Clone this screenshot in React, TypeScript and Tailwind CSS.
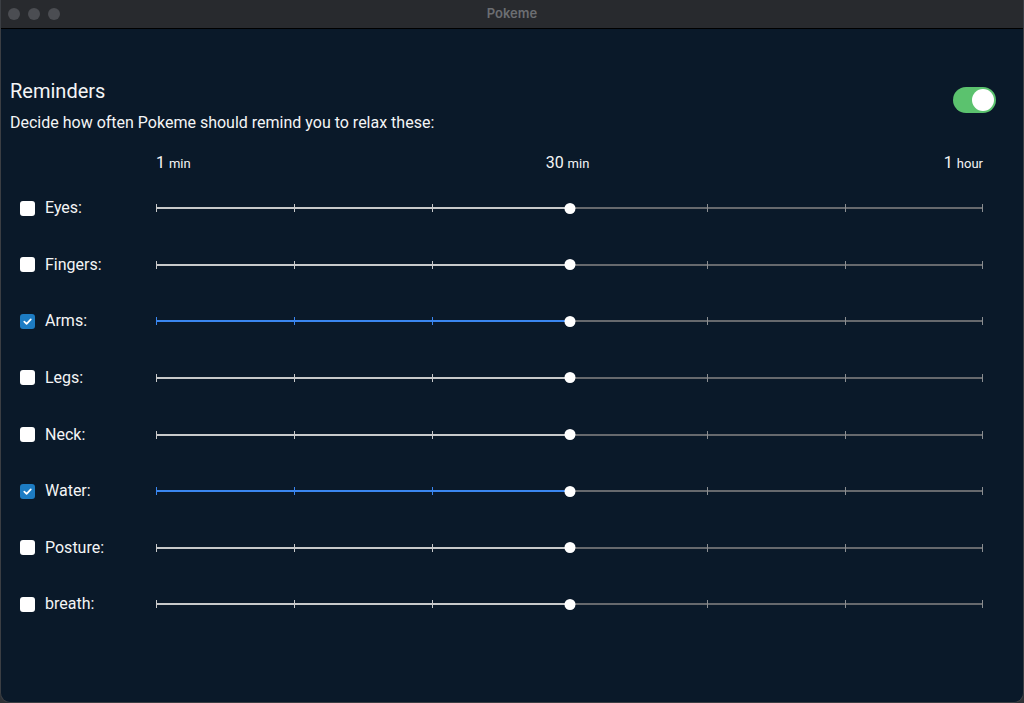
import { useState } from "react";

type Reminder = { id: string; label: string; on: boolean; value: number };

const initial: Reminder[] = [
  { id: "eyes", label: "Eyes:", on: false, value: 30 },
  { id: "fingers", label: "Fingers:", on: false, value: 30 },
  { id: "arms", label: "Arms:", on: true, value: 30 },
  { id: "legs", label: "Legs:", on: false, value: 30 },
  { id: "neck", label: "Neck:", on: false, value: 30 },
  { id: "water", label: "Water:", on: true, value: 30 },
  { id: "posture", label: "Posture:", on: false, value: 30 },
  { id: "breath", label: "breath:", on: false, value: 30 },
];

const ticks = [0, 1, 2, 3, 4, 5, 6];

// 0~60분 → 0~100%
function pct(v: number) {
  return (v / 60) * 100;
}

function Slider({ value, active }: { value: number; active: boolean }) {
  const p = pct(value);
  const fill = active ? "bg-[#3a86f0]" : "bg-[#c8c9ca]";
  return (
    <div className="relative h-[16px] flex-1">
      <div className="absolute left-0 right-0 top-[7px] h-[2px] bg-[#66696d]" />
      <div className={`absolute left-0 top-[7px] h-[2px] ${fill}`} style={{ width: `${p}%` }} />
      {ticks.map((t) => {
        const at = (t / 6) * 100;
        const left = at <= p ? fill : "bg-[#8a8d90]";
        return (
          <div
            key={t}
            className={`absolute top-[4px] h-[8px] w-[1px] ${left}`}
            style={{ left: `calc(${at}% - ${t === 6 ? 1 : 0}px)` }}
          />
        );
      })}
      <div
        className="absolute top-[2.5px] h-[11px] w-[11px] -translate-x-1/2 rounded-full bg-white"
        style={{ left: `${p}%` }}
      />
    </div>
  );
}

function Check({ on, onClick }: { on: boolean; onClick: () => void }) {
  return (
    <button
      type="button"
      onClick={onClick}
      className={`grid h-[15px] w-[15px] shrink-0 place-items-center rounded-[3px] ${
        on ? "bg-[#1d7cc3]" : "bg-white"
      }`}
    >
      {on && (
        <svg viewBox="0 0 12 12" className="h-[11px] w-[11px]" fill="none">
          <path d="M2.5 6.2 5 8.6 9.6 3.6" stroke="white" strokeWidth="1.9" strokeLinecap="round" strokeLinejoin="round" />
        </svg>
      )}
    </button>
  );
}

export default function App() {
  const [items, setItems] = useState(initial);
  const [enabled, setEnabled] = useState(true);

  return (
    <div className="h-[703px] w-[1024px] overflow-hidden bg-[#2e3135] font-['Roboto','Noto_Sans',sans-serif] text-[#f4f5f6]">
      <div className="flex h-full flex-col overflow-hidden rounded-b-[10px] border-x border-b border-[#3b3e43] bg-[#0a1929]">
        {/* 타이틀바 */}
        <div className="relative flex h-[29px] shrink-0 items-center border-b border-black bg-[#282a2e] px-[7px]">
          <div className="flex gap-[8px]">
            <span className="h-[12px] w-[12px] rounded-full bg-[#4b4d52]" />
            <span className="h-[12px] w-[12px] rounded-full bg-[#4b4d52]" />
            <span className="h-[12px] w-[12px] rounded-full bg-[#4b4d52]" />
          </div>
          <span className="absolute inset-x-0 text-center font-['Inter',sans-serif] text-[13px] font-semibold text-[#6c6e72]">
            Pokeme
          </span>
        </div>

        <div className="pt-[50px]">
          {/* 헤더 */}
          <div className="flex items-start justify-between pl-[9px] pr-[27px]">
            <div>
              <h2 className="text-[20px] leading-[24px]">Reminders</h2>
              <p className="mt-[10px] text-[16px] leading-[20px]">
                Decide how often Pokeme should remind you to relax these:
              </p>
            </div>
            <button
              type="button"
              onClick={() => setEnabled(!enabled)}
              className={`mt-[8px] flex h-[26px] w-[43px] items-center rounded-full px-[2px] ${
                enabled ? "justify-end bg-[#5bc26e]" : "justify-start bg-[#55585c]"
              }`}
            >
              <span className="h-[22px] w-[22px] rounded-full bg-white" />
            </button>
          </div>

          {/* 눈금 라벨 */}
          <div className="mt-[20px] flex pr-[40px]">
            <div className="w-[155px] shrink-0" />
            <div className="grid flex-1 grid-cols-3 text-[16px] leading-[20px]">
              <span className="text-left">
                1 <span className="text-[13px]">min</span>
              </span>
              <span className="pr-[4px] text-center">
                30 <span className="text-[13px]">min</span>
              </span>
              <span className="text-right">
                1 <span className="text-[13px]">hour</span>
              </span>
            </div>
          </div>

          {/* 항목 */}
          <div className="mt-[6px]">
            {items.map((it) => (
              <div key={it.id} className="flex h-[56.57px] items-center pl-[19px] pr-[40px]">
                <div className="flex w-[136px] shrink-0 items-center gap-[10px]">
                  <Check
                    on={it.on}
                    onClick={() =>
                      setItems(items.map((x) => (x.id === it.id ? { ...x, on: !x.on } : x)))
                    }
                  />
                  <span className="text-[16px] leading-[18px]">{it.label}</span>
                </div>
                <Slider value={it.value} active={it.on} />
              </div>
            ))}
          </div>
        </div>
      </div>
    </div>
  );
}
